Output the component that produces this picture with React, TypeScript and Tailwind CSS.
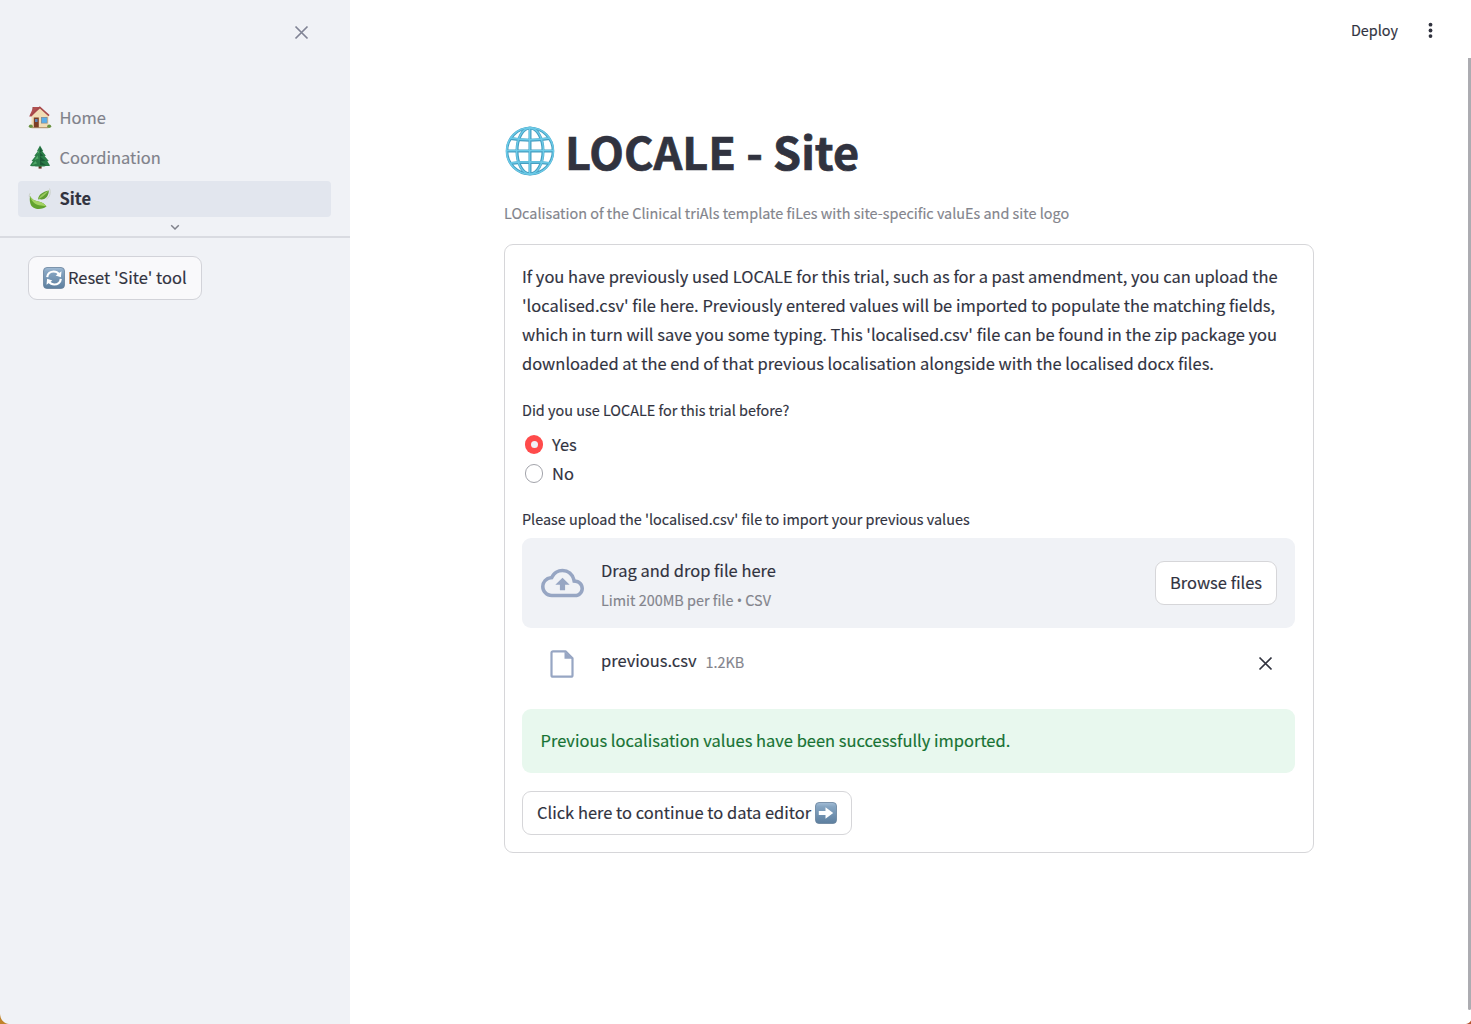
import type { ReactNode } from "react";

const intro = [
  "If you have previously used LOCALE for this trial, such as for a past amendment, you can upload the",
  "'localised.csv' file here. Previously entered values will be imported to populate the matching fields,",
  "which in turn will save you some typing. This 'localised.csv' file can be found in the zip package you",
  "downloaded at the end of that previous localisation alongside with the localised docx files.",
];

function House() {
  return (
    <svg viewBox="0 0 24 24" className="h-[24px] w-[24px] shrink-0">
      <path d="M4.500 2h3v7h-3z" fill="#8e4540" />
      <path d="M3.500 9.500 12.500 3 20.500 10v13h-17z" fill="#f1dcb4" />
      <path d="M5.500 2h6.800L3.500 11.500H1.200z" fill="#b05050" />
      <path d="m11.800 1.200 9.800 8.800-1.100 1.200-8.600-7.700-8.600 7.600-1.300-1z" fill="#a8484a" />
      <path d="M5.800 12.500h5v10.500h-5z" fill="#7b3e25" />
      <path d="M7 14h2.600v3H7z" fill="#5b83b8" />
      <path d="M13 12h6.600v6.500H13z" fill="#8c8a8a" />
      <path d="M13.700 12.700h5.200v5.100h-5.200z" fill="#5aaeea" />
      <path d="M3.500 22.200h17v1H3.500z" fill="#a98a66" />
      <ellipse cx="2.800" cy="21.300" rx="2" ry="1.700" fill="#6a9140" />
      <ellipse cx="21.200" cy="21.300" rx="2" ry="1.700" fill="#6a9140" />
    </svg>
  );
}

function Tree() {
  return (
    <svg viewBox="0 0 24 24" className="h-[24px] w-[24px] shrink-0">
      <path d="M10.600 19h3v4.600h-3z" fill="#5c3420" />
      <path d="m12 .5 3.200 5.400-.9.300 3.600 4.500-1.300.3 4.200 5-1.500.3 2.700 4.100c-2 1.200-4 .4-5 .9-1.800.7-3.600-.1-5.200.4-1.800-.5-3.400.2-5-.4-1.600.1-3.400 0-4.800-.9l3-4.100-1.500-.3 4-5-1.200-.3 3.500-4.500-.8-.3z" fill="#2b7d48" />
      <path d="m12 2 2 4-2 1.500 3.500 3-3.500 1 5.500 4.500-5 .5 6 4-6.500-.5z" fill="#1b5a36" />
      <path d="m11 5-2 3.500 2-.5zM9.500 10.500l-3 4.500 4-1.500zM7.500 16l-3.500 4 5-1.500z" fill="#4fa767" />
    </svg>
  );
}

function Leaves() {
  return (
    <svg viewBox="0 0 24 24" className="h-[24px] w-[24px] shrink-0">
      <path d="M21.500 1.500c1.500 4 .5 8.500-3 10.500M1.500 10c-.6-1.500 0-3 1-4" fill="none" stroke="#cbd0c8" strokeWidth="1" />
      <path d="M10 12.600C10.500 7.500 14.500 5 20.800 3.500c.2 4.500-2.800 9.300-7.600 9-1.500-.2-2.200-.2-3.200.1z" fill="#5f9c32" />
      <path d="M10 12.600C12 8.500 15.500 6 20.800 3.500 18 7.500 14 10.500 10 12.600z" fill="#98c95c" />
      <path d="M2 9c1.500 3 4.500 5 8.500 5.500 4 .6 6 2.500 8 4.800-4 3.800-14 4-16-2.300-1-3-.8-5.500-.5-8z" fill="#62a32e" />
      <path d="M2 9c1 4.500 4 8 9 9.200 2.800.5 5 .7 7.500 1.100-2-2.300-4.500-4.200-8-4.800C6.500 14 3.500 12 2 9z" fill="#a3d262" />
    </svg>
  );
}

function Globe() {
  return (
    <svg viewBox="0 0 50 50" className="h-[50px] w-[50px] shrink-0" fill="none" stroke="#469fc2" strokeWidth="3">
      <circle cx="25" cy="25" r="23" strokeWidth="2.600" />
      <ellipse cx="25" cy="25" rx="13" ry="23" />
      <path d="M25 1.500v47M1.500 25h47M5.500 12.500c12 2.200 27 2.200 39 0M5.500 37.500c12-1.500 27-1.500 39 0" />
      <g stroke="#6ccbe8" strokeWidth="1.400">
        <circle cx="25" cy="25" r="23.400" />
        <ellipse cx="25" cy="25" rx="13.400" ry="23" />
        <path d="M24.600 1.500v47M1.500 24.600h47M5.500 12c12 2.200 27 2.200 39 0M5.500 37c12-1.500 27-1.500 39 0" />
      </g>
    </svg>
  );
}

function Tile({ children }: { children: ReactNode }) {
  return (
    <svg viewBox="0 0 22 22" className="h-[22px] w-[22px] shrink-0">
      <defs>
        <linearGradient id="tile" x1="0" y1="0" x2="0" y2="1">
          <stop offset="0" stopColor="#a3bdd6" />
          <stop offset=".2" stopColor="#86a5c2" />
          <stop offset="1" stopColor="#5d7f9f" />
        </linearGradient>
      </defs>
      <rect x=".5" y=".5" width="21" height="21" rx="3.500" fill="url(#tile)" stroke="#67829c" strokeWidth=".8" />
      {children}
    </svg>
  );
}

const nav = [
  { label: "Home", icon: <House />, row: "mt-[80px]", text: "text-[#7f818a]" },
  { label: "Coordination", icon: <Tree />, row: "mt-[4px]", text: "text-[#7f818a]" },
  { label: "Site", icon: <Leaves />, row: "mt-[6px] bg-[#e2e6ee]", text: "font-bold pb-[1px]" },
];

function Sidebar() {
  return (
    <aside className="flex h-full w-[350px] shrink-0 flex-col bg-[#f0f2f6]">
      <div className="flex h-[20px] justify-end pr-[42px] pt-[26px]">
        <svg viewBox="0 0 14 14" className="h-[14px] w-[14px] shrink-0 translate-x-[0.500px] -translate-y-[0.500px]" stroke="#808495" strokeWidth="1.700" fill="none">
          <path d="m1 1 12 12M13 1 1 13" />
        </svg>
      </div>
      <nav className="-mt-[7px] flex flex-col pl-[18px] pr-[19px]">
        {nav.map((n) => (
          <div key={n.label} className={`flex h-[36px] items-center gap-[7.500px] rounded-[4px] pl-[10px] ${n.row}`}>
            {n.icon}
            <span className={n.text}>{n.label}</span>
          </div>
        ))}
      </nav>
      <div className="flex h-[21px] justify-center border-b-2 border-[#d9dbe1] pt-[7px]">
        <svg viewBox="0 0 10 7" className="h-[7px] w-[10px]" stroke="#7f818a" strokeWidth="1.500" fill="none">
          <path d="m1.200 1.200 3.800 3.800 3.800-3.800" />
        </svg>
      </div>
      <button className="ml-[28px] mt-[18px] flex h-[44px] w-[174px] items-center gap-[3.500px] whitespace-nowrap rounded-[9px] border border-[#d2d3d9] bg-[#f9f9fb] pl-[13.500px] pb-[1px]">
        <Tile>
          <path d="M4.200 10.200C4.500 6.500 7.500 4.500 10.800 4.500c2.400 0 4 1 5.200 2.600M17.800 11.800c-.3 3.700-3.300 5.700-6.600 5.700-2.400 0-4-1-5.200-2.600" fill="none" stroke="#fff" strokeWidth="2.200" />
          <path d="m18.500 4.200-.6 6-5.300-1.800zM3.500 17.800l.6-6 5.300 1.800z" fill="#fff" />
        </Tile>
        <span className="pb-[1px]">Reset 'Site' tool</span>
      </button>
    </aside>
  );
}

function Uploader() {
  return (
    <section className="mt-[8px] flex h-[90px] items-center rounded-[9px] bg-[#f0f2f6] pl-[18.500px] pr-[18px]">
      <svg viewBox="0 0 24 24" className="h-[43px] w-[43px] shrink-0 -translate-y-[0.500px]" fill="#97a6c3">
        <path d="M19.350 10.040A7.490 7.490 0 0 0 12 4C9.110 4 6.600 5.640 5.350 8.040A5.994 5.994 0 0 0 0 14c0 3.310 2.690 6 6 6h13c2.760 0 5-2.240 5-5 0-2.640-2.050-4.780-4.650-4.960zM19 18H6c-2.210 0-4-1.790-4-4 0-2.050 1.530-3.760 3.560-3.970l1.070-.11.500-.95A5.469 5.469 0 0 1 12 6c2.620 0 4.880 1.860 5.390 4.430l.3 1.500 1.530.11A2.980 2.980 0 0 1 22 15c0 1.650-1.350 3-3 3zM8 13h2.550v3h2.900v-3H16l-4-4z" />
      </svg>
      <div className="ml-[17.500px] flex-1 whitespace-nowrap">
        <p className="pt-[1px] leading-[29px]">Drag and drop file here</p>
        <p className="mt-[4px] text-[14.400px] leading-[22px] text-[#83848c]">
          Limit 200MB per file <span className="font-['Open_Sans',sans-serif]">•</span> CSV
        </p>
      </div>
      <button className="h-[44px] w-[122px] whitespace-nowrap rounded-[9px] border border-[#d6d6d9] bg-white pb-[2px]">Browse files</button>
    </section>
  );
}

export default function App() {
  return (
    <div className="flex h-[1024px] w-[1471px] overflow-hidden bg-white font-['Noto_Sans_CJK_SC',sans-serif] text-[16.480px] leading-[29px] text-[#31333f] [-webkit-text-stroke:0.150px]">
      <Sidebar />
      <main className="relative flex min-w-0 flex-1 flex-col">
        <header className="flex h-[60px] items-center justify-end pr-[38px] text-[14.400px]">
          <span className="pb-[2px]">Deploy</span>
          <svg viewBox="0 0 5 16" className="ml-[30px] h-[16px] w-[5px]" fill="#31333f">
            <circle cx="2.500" cy="2.700" r="1.900" />
            <circle cx="2.500" cy="8.500" r="1.900" />
            <circle cx="2.500" cy="14.100" r="1.900" />
          </svg>
        </header>
        <div className="ml-[154px] w-[810px] whitespace-nowrap">
          <h1 className="mt-[61px] flex h-[60px] items-center gap-[10px] pl-[1px] text-[45px] font-bold leading-[60px] [-webkit-text-stroke:0.700px]">
            <Globe />
            <span>LOCALE - Site</span>
          </h1>
          <p className="mt-[20px] h-[23px] text-[14.410px] leading-[23px] text-[#83848c]">
            LOcalisation of the Clinical triAls template fiLes with site-specific valuEs and site logo
          </p>
          <div className="mt-[20px] h-[609px] rounded-[9px] border border-[#d6d6d9] pl-[17px] pr-[18px] pt-[17px]">
            {intro.map((line) => (
              <p key={line}>{line}</p>
            ))}
            <p className="mt-[20px] h-[23px] text-[14.420px] leading-[23px]">Did you use LOCALE for this trial before?</p>
            <div className="mt-[9px] flex h-[29px] items-center gap-[9px] pl-[3px]">
              <span className="flex h-[19px] w-[18px] items-center justify-center rounded-full bg-[#ff4b4b]">
                <span className="h-[7px] w-[7px] rounded-full bg-[#f0f2f6]" />
              </span>
              Yes
            </div>
            <div className="flex h-[29px] items-center gap-[9px] pl-[3px]">
              <span className="h-[19px] w-[18px] rounded-full border border-[#a3a4ab] bg-white" />
              No
            </div>
            <p className="mt-[20px] h-[22px] text-[14.420px] leading-[22px]">
              Please upload the 'localised.csv' file to import your previous values
            </p>
            <Uploader />
            <div className="mt-[19px] flex h-[34px] items-center pl-[27.500px] pr-[22px]">
              <svg viewBox="0 0 24 28" className="h-[28px] w-[24px] shrink-0" fill="none" stroke="#97a6c3" strokeWidth="2.200" strokeLinejoin="round">
                <path d="M15.500 1.300H3a1.500 1.500 0 0 0-1.500 1.500v22.400A1.500 1.500 0 0 0 3 26.700h18a1.500 1.500 0 0 0 1.500-1.500V8.300z" />
                <path d="M14.500 1.500v7.300h8z" fill="#97a6c3" stroke="none" />
              </svg>
              <span className="-mt-[7px] ml-[27.500px]">previous.csv</span>
              <span className="-mt-[6px] ml-[9px] flex-1 text-[14.400px] text-[#83848c]">1.2KB</span>
              <svg viewBox="0 0 14 14" className="h-[14px] w-[14px] -translate-x-[0.500px] -translate-y-[0.500px]" stroke="#31333f" strokeWidth="1.700" fill="none">
                <path d="m1 1 12 12M13 1 1 13" />
              </svg>
            </div>
            <div className="mt-[28px] flex h-[64px] items-center rounded-[9px] bg-[#e8f8ee] pb-[2px] pl-[18.500px] text-[#177233]">
              Previous localisation values have been successfully imported.
            </div>
            <button className="mt-[18px] flex h-[44px] w-[330px] items-center gap-[3.500px] rounded-[9px] border border-[#d6d6d9] bg-white pb-[1px] pl-[14px]">
              <span className="pb-[1px]">Click here to continue to data editor</span>
              <Tile>
                <path d="M3.800 9h6.700V5.200l7.700 5.800-7.700 5.800V13H3.800z" fill="#fff" />
              </Tile>
            </button>
          </div>
        </div>
        <div className="absolute right-0 top-[58px] h-[952px] w-[3px] rounded-b-[2px] bg-[#acacb1]" />
      </main>
      <svg viewBox="0 0 10 10" className="absolute left-0 top-[1014px] h-[10px] w-[10px]">
        <path d="M0 0c.5 6 4 9.500 9 10H0z" fill="#c0832b" />
      </svg>
      <svg viewBox="0 0 10 10" className="absolute left-[1461px] top-[1014px] h-[10px] w-[10px]">
        <path d="M10 6.500C9 8.500 7.500 9.500 5 10h5z" fill="#b5532c" />
      </svg>
    </div>
  );
}
